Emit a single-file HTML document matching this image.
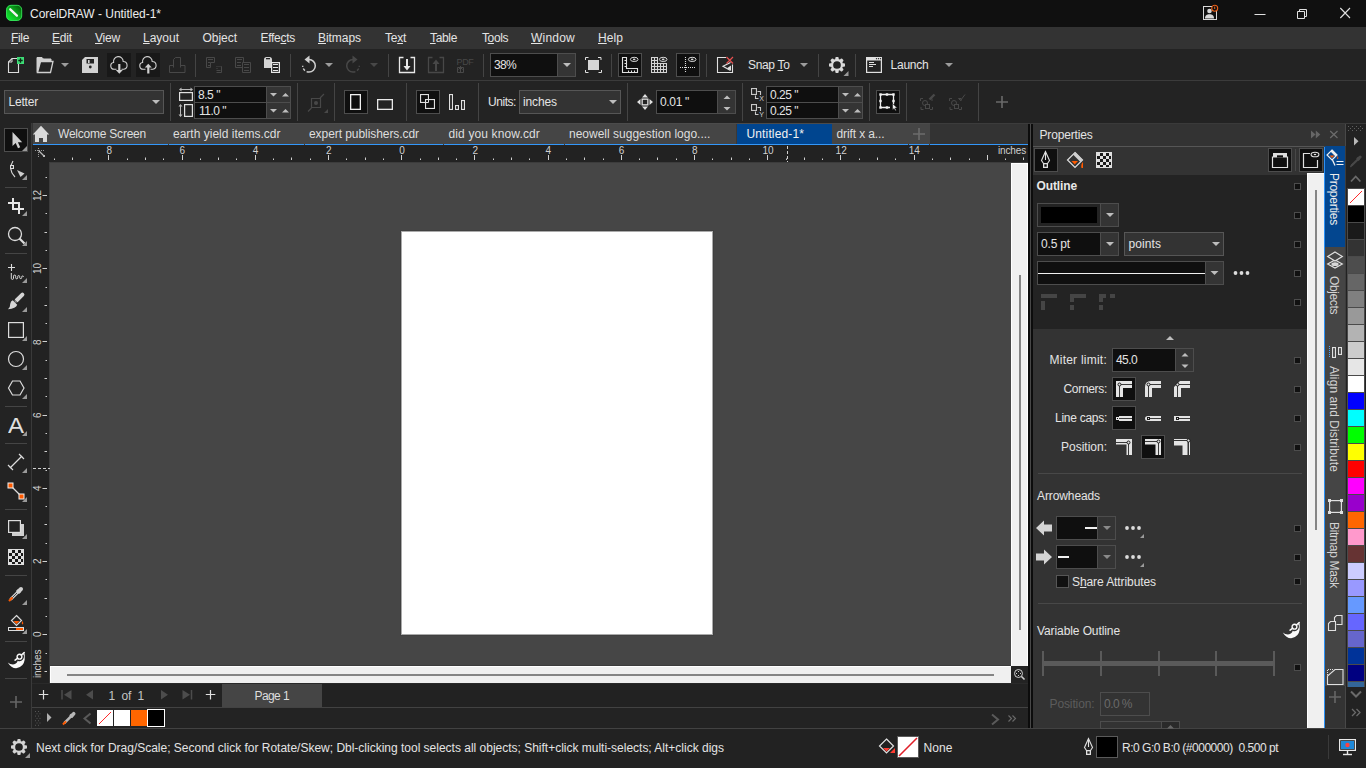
<!DOCTYPE html>
<html><head><meta charset="utf-8"><title>CorelDRAW - Untitled-1*</title>
<style>
*{box-sizing:border-box;margin:0;padding:0}
html,body{width:1366px;height:768px;overflow:hidden;background:#232323;font-family:"Liberation Sans",sans-serif;font-size:12px;color:#d8d8d8}
.a{position:absolute}
.t{position:absolute;white-space:pre}
u{text-decoration-thickness:1px;text-underline-offset:1px}
svg{position:absolute;left:0;top:0}
</style></head><body>
<div class="a" style="left:0px;top:0px;width:1366px;height:27px;background:#101010;"></div>
<div class="a" style="left:0px;top:27px;width:1366px;height:22px;background:#333;"></div>
<div class="a" style="left:0px;top:49px;width:1366px;height:31px;background:#232323;"></div>
<div class="a" style="left:0px;top:80px;width:1366px;height:1px;background:#3b3b3b;"></div>
<div class="a" style="left:107px;top:53px;width:24px;height:24px;background:#181818;"></div>
<div class="a" style="left:136px;top:53px;width:24px;height:24px;background:#181818;"></div>
<div class="a" style="left:195px;top:54px;width:1px;height:23px;background:#444;"></div>
<div class="a" style="left:290px;top:54px;width:1px;height:23px;background:#444;"></div>
<div class="a" style="left:388px;top:54px;width:1px;height:23px;background:#444;"></div>
<div class="a" style="left:483px;top:54px;width:1px;height:23px;background:#444;"></div>
<div class="a" style="left:490px;top:53px;width:86px;height:24px;background:#0f0f0f;border:1px solid #4d4d4d;"></div>
<div class="a" style="left:558px;top:54px;width:17px;height:22px;background:#343434;"></div>
<div class="a" style="left:557px;top:54px;width:1px;height:22px;background:#4d4d4d;"></div>
<div class="a" style="left:611px;top:54px;width:1px;height:23px;background:#444;"></div>
<div class="a" style="left:618px;top:53px;width:24px;height:24px;background:#0f0f0f;border:1px solid #4d4d4d;"></div>
<div class="a" style="left:676px;top:53px;width:24px;height:24px;background:#0f0f0f;border:1px solid #4d4d4d;"></div>
<div class="a" style="left:706px;top:54px;width:1px;height:23px;background:#444;"></div>
<div class="a" style="left:818px;top:54px;width:1px;height:23px;background:#444;"></div>
<div class="a" style="left:855px;top:54px;width:1px;height:23px;background:#444;"></div>
<div class="a" style="left:0px;top:81px;width:1366px;height:42px;background:#232323;"></div>
<div class="a" style="left:4px;top:90px;width:160px;height:24px;background:#333;border:1px solid #565656;"></div>
<div class="a" style="left:170px;top:83px;width:1px;height:38px;background:#444;"></div>
<div class="a" style="left:194px;top:86px;width:97px;height:33px;background:#0f0f0f;border:1px solid #4d4d4d;"></div>
<div class="a" style="left:267px;top:87px;width:23px;height:31px;background:#343434;"></div>
<div class="a" style="left:266px;top:87px;width:1px;height:31px;background:#4d4d4d;"></div>
<div class="a" style="left:195px;top:102px;width:95px;height:1px;background:#4d4d4d;"></div>
<div class="a" style="left:297px;top:83px;width:1px;height:38px;background:#444;"></div>
<div class="a" style="left:334px;top:83px;width:1px;height:38px;background:#444;"></div>
<div class="a" style="left:344px;top:90px;width:24px;height:24px;background:#0f0f0f;border:1px solid #4d4d4d;"></div>
<div class="a" style="left:406px;top:83px;width:1px;height:38px;background:#444;"></div>
<div class="a" style="left:416px;top:90px;width:24px;height:24px;background:#0f0f0f;border:1px solid #4d4d4d;"></div>
<div class="a" style="left:478px;top:83px;width:1px;height:38px;background:#444;"></div>
<div class="a" style="left:519px;top:90px;width:102px;height:24px;background:#333;border:1px solid #565656;"></div>
<div class="a" style="left:627px;top:83px;width:1px;height:38px;background:#444;"></div>
<div class="a" style="left:656px;top:90px;width:80px;height:24px;background:#0f0f0f;border:1px solid #4d4d4d;"></div>
<div class="a" style="left:718px;top:91px;width:17px;height:22px;background:#343434;"></div>
<div class="a" style="left:717px;top:91px;width:1px;height:22px;background:#4d4d4d;"></div>
<div class="a" style="left:742px;top:83px;width:1px;height:38px;background:#444;"></div>
<div class="a" style="left:766px;top:86px;width:97px;height:33px;background:#0f0f0f;border:1px solid #4d4d4d;"></div>
<div class="a" style="left:839px;top:87px;width:23px;height:31px;background:#343434;"></div>
<div class="a" style="left:838px;top:87px;width:1px;height:31px;background:#4d4d4d;"></div>
<div class="a" style="left:767px;top:102px;width:95px;height:1px;background:#4d4d4d;"></div>
<div class="a" style="left:869px;top:83px;width:1px;height:38px;background:#444;"></div>
<div class="a" style="left:876px;top:90px;width:24px;height:24px;background:#0f0f0f;border:1px solid #4d4d4d;"></div>
<div class="a" style="left:906px;top:83px;width:1px;height:38px;background:#444;"></div>
<div class="a" style="left:978px;top:83px;width:1px;height:38px;background:#444;"></div>
<div class="a" style="left:0px;top:123px;width:31px;height:606px;background:#232323;"></div>
<div class="a" style="left:31px;top:123px;width:1px;height:606px;background:#3a3a3a;"></div>
<div class="a" style="left:5px;top:187px;width:22px;height:1px;background:#454545;"></div>
<div class="a" style="left:5px;top:253px;width:22px;height:1px;background:#454545;"></div>
<div class="a" style="left:5px;top:406px;width:22px;height:1px;background:#454545;"></div>
<div class="a" style="left:5px;top:443px;width:22px;height:1px;background:#454545;"></div>
<div class="a" style="left:5px;top:509px;width:22px;height:1px;background:#454545;"></div>
<div class="a" style="left:5px;top:575px;width:22px;height:1px;background:#454545;"></div>
<div class="a" style="left:5px;top:641px;width:22px;height:1px;background:#454545;"></div>
<div class="a" style="left:5px;top:678px;width:22px;height:1px;background:#454545;"></div>
<div class="a" style="left:4px;top:128px;width:24px;height:24px;background:#0f0f0f;border:1px solid #4d4d4d;"></div>
<div class="a" style="left:32px;top:123px;width:996px;height:22px;background:#333;"></div>
<div class="a" style="left:930px;top:123px;width:98px;height:1px;background:#3c3c3c;"></div>
<div class="a" style="left:33px;top:123px;width:897px;height:21px;background:#454545;"></div>
<div class="a" style="left:33px;top:123px;width:897px;height:1px;background:#4b4b4b;"></div>
<div class="a" style="left:736px;top:124px;width:1px;height:20px;background:#3c3835;"></div>
<div class="a" style="left:737px;top:124px;width:95px;height:20px;background:#00458f;"></div>
<div class="a" style="left:33px;top:144px;width:995px;height:1px;background:#3397fa;"></div>
<div class="a" style="left:168px;top:144px;width:1px;height:1px;background:#3a3a3a;"></div>
<div class="a" style="left:304px;top:144px;width:1px;height:1px;background:#3a3a3a;"></div>
<div class="a" style="left:443px;top:144px;width:1px;height:1px;background:#3a3a3a;"></div>
<div class="a" style="left:564px;top:144px;width:1px;height:1px;background:#3a3a3a;"></div>
<div class="a" style="left:908px;top:144px;width:1px;height:1px;background:#3a3a3a;"></div>
<div class="a" style="left:929px;top:144px;width:1px;height:1px;background:#3a3a3a;"></div>
<div class="a" style="left:32px;top:145px;width:996px;height:17px;background:#222;"></div>
<div class="a" style="left:32px;top:162px;width:17px;height:521px;background:#222;"></div>
<div class="a" style="left:49px;top:162px;width:962px;height:504px;background:#464646;"></div>
<div class="a" style="left:49px;top:162px;width:1px;height:521px;background:#3c3c3c;"></div>
<div class="a" style="left:49px;top:665px;width:962px;height:1px;background:#3c3c3c;"></div>
<div class="a" style="left:400px;top:230px;width:314px;height:406px;background:#aaa;border:1px solid #404040;"></div>
<div class="a" style="left:402px;top:232px;width:310px;height:402px;background:#fff;"></div>
<div class="a" style="left:49px;top:162px;width:979px;height:1px;background:#3c3c3c;"></div>
<div class="a" style="left:1011px;top:163px;width:17px;height:503px;background:#f0f0f0;"></div>
<div class="a" style="left:1011px;top:163px;width:1px;height:503px;background:#fff;"></div>
<div class="a" style="left:1027px;top:163px;width:1px;height:503px;background:#fff;"></div>
<div class="a" style="left:1011px;top:163px;width:17px;height:1px;background:#fff;"></div>
<div class="a" style="left:1019px;top:275px;width:2px;height:355px;background:#858585;"></div>
<div class="a" style="left:50px;top:666px;width:961px;height:17px;background:#f0f0f0;"></div>
<div class="a" style="left:50px;top:666px;width:961px;height:1px;background:#fff;"></div>
<div class="a" style="left:50px;top:666px;width:1px;height:17px;background:#fff;"></div>
<div class="a" style="left:67px;top:674px;width:927px;height:2px;background:#858585;"></div>
<div class="a" style="left:1011px;top:666px;width:17px;height:17px;background:#232323;"></div>
<div class="a" style="left:32px;top:683px;width:996px;height:25px;background:#222;"></div>
<div class="a" style="left:32px;top:683px;width:996px;height:1px;background:#2a2a2a;"></div>
<div class="a" style="left:32px;top:707px;width:996px;height:1px;background:#424242;"></div>
<div class="a" style="left:222px;top:684px;width:100px;height:23px;background:#454545;"></div>
<div class="a" style="left:32px;top:708px;width:996px;height:20px;background:#232323;"></div>
<div class="a" style="left:0px;top:728px;width:1366px;height:1px;background:#424242;"></div>
<div class="a" style="left:97px;top:710px;width:16px;height:16px;background:#fff;"></div>
<div class="a" style="left:114px;top:710px;width:16px;height:16px;background:#fff;"></div>
<div class="a" style="left:131px;top:710px;width:16px;height:16px;background:#ff6600;"></div>
<div class="a" style="left:147px;top:709px;width:18px;height:18px;background:#000;border:1px solid #fff;"></div>
<div class="a" style="left:1028px;top:123px;width:5px;height:605px;background:#0c0c0c;"></div>
<div class="a" style="left:1030px;top:124px;width:1px;height:604px;background:#484848;"></div>
<div class="a" style="left:1028px;top:123px;width:5px;height:1px;background:#3a3a3a;"></div>
<div class="a" style="left:1033px;top:123px;width:313px;height:1px;background:#3a3a3a;"></div>
<div class="a" style="left:1033px;top:124px;width:313px;height:22px;background:#333;"></div>
<div class="a" style="left:1033px;top:146px;width:292px;height:1px;background:#565656;"></div>
<div class="a" style="left:1033px;top:147px;width:292px;height:28px;background:#333;"></div>
<div class="a" style="left:1033px;top:175px;width:274px;height:154px;background:#232323;"></div>
<div class="a" style="left:1033px;top:329px;width:274px;height:399px;background:#333;"></div>
<div class="a" style="left:1034px;top:148px;width:24px;height:24px;background:#0f0f0f;border:1px solid #4d4d4d;"></div>
<div class="a" style="left:1268px;top:148px;width:24px;height:24px;background:#0f0f0f;border:1px solid #4d4d4d;"></div>
<div class="a" style="left:1299px;top:148px;width:24px;height:24px;background:#0f0f0f;border:1px solid #4d4d4d;"></div>
<div class="a" style="left:1295px;top:149px;width:1px;height:22px;background:#484848;"></div>
<div class="a" style="left:1294px;top:183.0px;width:7px;height:7px;background:#111;border:1px solid #4c4c4c;"></div>
<div class="a" style="left:1294px;top:212.0px;width:7px;height:7px;background:#111;border:1px solid #4c4c4c;"></div>
<div class="a" style="left:1294px;top:241.0px;width:7px;height:7px;background:#111;border:1px solid #4c4c4c;"></div>
<div class="a" style="left:1294px;top:270.0px;width:7px;height:7px;background:#111;border:1px solid #4c4c4c;"></div>
<div class="a" style="left:1294px;top:299.0px;width:7px;height:7px;background:#111;border:1px solid #4c4c4c;"></div>
<div class="a" style="left:1294px;top:357.0px;width:7px;height:7px;background:#111;border:1px solid #4c4c4c;"></div>
<div class="a" style="left:1294px;top:386.0px;width:7px;height:7px;background:#111;border:1px solid #4c4c4c;"></div>
<div class="a" style="left:1294px;top:415.0px;width:7px;height:7px;background:#111;border:1px solid #4c4c4c;"></div>
<div class="a" style="left:1294px;top:444.0px;width:7px;height:7px;background:#111;border:1px solid #4c4c4c;"></div>
<div class="a" style="left:1294px;top:525.0px;width:7px;height:7px;background:#111;border:1px solid #4c4c4c;"></div>
<div class="a" style="left:1294px;top:554.0px;width:7px;height:7px;background:#111;border:1px solid #4c4c4c;"></div>
<div class="a" style="left:1294px;top:578.0px;width:7px;height:7px;background:#111;border:1px solid #4c4c4c;"></div>
<div class="a" style="left:1294px;top:664.0px;width:7px;height:7px;background:#111;border:1px solid #4c4c4c;"></div>
<div class="a" style="left:1037px;top:203px;width:82px;height:24px;background:#232323;border:1px solid #4d4d4d;"></div>
<div class="a" style="left:1041px;top:207px;width:56px;height:16px;background:#000;"></div>
<div class="a" style="left:1101px;top:204px;width:17px;height:22px;background:#343434;"></div>
<div class="a" style="left:1100px;top:204px;width:1px;height:22px;background:#4d4d4d;"></div>
<div class="a" style="left:1037px;top:232px;width:82px;height:24px;background:#0f0f0f;border:1px solid #4d4d4d;"></div>
<div class="a" style="left:1101px;top:233px;width:17px;height:22px;background:#343434;"></div>
<div class="a" style="left:1100px;top:233px;width:1px;height:22px;background:#4d4d4d;"></div>
<div class="a" style="left:1124px;top:232px;width:100px;height:24px;background:#333;border:1px solid #565656;"></div>
<div class="a" style="left:1037px;top:261px;width:187px;height:24px;background:#0f0f0f;border:1px solid #4d4d4d;"></div>
<div class="a" style="left:1038px;top:273px;width:167px;height:1px;background:#f0f0f0;"></div>
<div class="a" style="left:1206px;top:262px;width:17px;height:22px;background:#343434;"></div>
<div class="a" style="left:1205px;top:262px;width:1px;height:22px;background:#4d4d4d;"></div>
<div class="a" style="left:1112px;top:348px;width:82px;height:24px;background:#0f0f0f;border:1px solid #4d4d4d;"></div>
<div class="a" style="left:1176px;top:349px;width:17px;height:22px;background:#343434;"></div>
<div class="a" style="left:1175px;top:349px;width:1px;height:22px;background:#4d4d4d;"></div>
<div class="a" style="left:1112px;top:377px;width:24px;height:24px;background:#0f0f0f;border:1px solid #4d4d4d;"></div>
<div class="a" style="left:1112px;top:406px;width:24px;height:24px;background:#0f0f0f;border:1px solid #4d4d4d;"></div>
<div class="a" style="left:1141px;top:435px;width:24px;height:24px;background:#0f0f0f;border:1px solid #4d4d4d;"></div>
<div class="a" style="left:1038px;top:473px;width:264px;height:1px;background:#484848;"></div>
<div class="a" style="left:1056px;top:516px;width:60px;height:24px;background:#0f0f0f;border:1px solid #4d4d4d;"></div>
<div class="a" style="left:1098px;top:517px;width:17px;height:22px;background:#343434;"></div>
<div class="a" style="left:1097px;top:517px;width:1px;height:22px;background:#4d4d4d;"></div>
<div class="a" style="left:1056px;top:545px;width:60px;height:24px;background:#0f0f0f;border:1px solid #4d4d4d;"></div>
<div class="a" style="left:1098px;top:546px;width:17px;height:22px;background:#343434;"></div>
<div class="a" style="left:1097px;top:546px;width:1px;height:22px;background:#4d4d4d;"></div>
<div class="a" style="left:1085px;top:527px;width:12px;height:2px;background:#f0f0f0;"></div>
<div class="a" style="left:1058px;top:556px;width:11px;height:2px;background:#f0f0f0;"></div>
<div class="a" style="left:1056px;top:575px;width:13px;height:13px;background:#111;border:1px solid #565656;"></div>
<div class="a" style="left:1038px;top:603px;width:264px;height:1px;background:#484848;"></div>
<div class="a" style="left:1100px;top:692px;width:50px;height:24px;background:#333;border:1px solid #4d4d4d;"></div>
<div class="a" style="left:1100px;top:721px;width:80px;height:8px;background:#333;border:1px solid #4d4d4d;"></div>
<div class="a" style="left:1162px;top:722px;width:17px;height:6px;background:#2a2a2a;"></div>
<div class="a" style="left:1161px;top:722px;width:1px;height:6px;background:#4d4d4d;"></div>
<div class="a" style="left:1307px;top:173px;width:17px;height:555px;background:#f0f0f0;"></div>
<div class="a" style="left:1307px;top:173px;width:1px;height:555px;background:#fff;"></div>
<div class="a" style="left:1307px;top:173px;width:17px;height:1px;background:#fff;"></div>
<div class="a" style="left:1315px;top:190px;width:2px;height:340px;background:#858585;"></div>
<div class="a" style="left:1324px;top:146px;width:22px;height:540px;background:#454545;"></div>
<div class="a" style="left:1324px;top:686px;width:22px;height:42px;background:#333;"></div>
<div class="a" style="left:1345px;top:686px;width:1px;height:42px;background:#484848;"></div>
<div class="a" style="left:1324px;top:147px;width:1px;height:581px;background:#2b90f5;"></div>
<div class="a" style="left:1325px;top:146px;width:20px;height:101px;background:#03468f;"></div>
<div class="a" style="left:1345px;top:146px;width:1px;height:540px;background:#3c3c3c;"></div>
<div class="a" style="left:1346px;top:123px;width:20px;height:605px;background:#222;"></div>
<div class="a" style="left:1346px;top:123px;width:20px;height:1px;background:#3a3a3a;"></div>
<div class="a" style="left:1345px;top:124px;width:1px;height:22px;background:#484848;"></div>
<div class="a" style="left:1347px;top:188px;width:18px;height:499px;background:#4a4a4a;"></div>
<div class="a" style="left:1348px;top:189px;width:16px;height:16px;background:#fff;"></div>
<div class="a" style="left:1348px;top:206px;width:16px;height:16px;background:#000000;"></div>
<div class="a" style="left:1348px;top:223px;width:16px;height:16px;background:#1a1a1a;"></div>
<div class="a" style="left:1348px;top:240px;width:16px;height:16px;background:#333333;"></div>
<div class="a" style="left:1348px;top:257px;width:16px;height:16px;background:#4d4d4d;"></div>
<div class="a" style="left:1348px;top:274px;width:16px;height:16px;background:#666666;"></div>
<div class="a" style="left:1348px;top:291px;width:16px;height:16px;background:#808080;"></div>
<div class="a" style="left:1348px;top:308px;width:16px;height:16px;background:#999999;"></div>
<div class="a" style="left:1348px;top:325px;width:16px;height:16px;background:#b3b3b3;"></div>
<div class="a" style="left:1348px;top:342px;width:16px;height:16px;background:#cccccc;"></div>
<div class="a" style="left:1348px;top:359px;width:16px;height:16px;background:#e6e6e6;"></div>
<div class="a" style="left:1348px;top:376px;width:16px;height:16px;background:#ffffff;"></div>
<div class="a" style="left:1348px;top:393px;width:16px;height:16px;background:#0000ff;"></div>
<div class="a" style="left:1348px;top:410px;width:16px;height:16px;background:#00ffff;"></div>
<div class="a" style="left:1348px;top:427px;width:16px;height:16px;background:#00ff00;"></div>
<div class="a" style="left:1348px;top:444px;width:16px;height:16px;background:#ffff00;"></div>
<div class="a" style="left:1348px;top:461px;width:16px;height:16px;background:#ff0000;"></div>
<div class="a" style="left:1348px;top:478px;width:16px;height:16px;background:#ff00ff;"></div>
<div class="a" style="left:1348px;top:495px;width:16px;height:16px;background:#9900cc;"></div>
<div class="a" style="left:1348px;top:512px;width:16px;height:16px;background:#ff6600;"></div>
<div class="a" style="left:1348px;top:529px;width:16px;height:16px;background:#ff99cc;"></div>
<div class="a" style="left:1348px;top:546px;width:16px;height:16px;background:#663333;"></div>
<div class="a" style="left:1348px;top:563px;width:16px;height:16px;background:#ccccff;"></div>
<div class="a" style="left:1348px;top:580px;width:16px;height:16px;background:#9999ff;"></div>
<div class="a" style="left:1348px;top:597px;width:16px;height:16px;background:#6699ff;"></div>
<div class="a" style="left:1348px;top:614px;width:16px;height:16px;background:#6666ff;"></div>
<div class="a" style="left:1348px;top:631px;width:16px;height:16px;background:#6666cc;"></div>
<div class="a" style="left:1348px;top:648px;width:16px;height:16px;background:#003399;"></div>
<div class="a" style="left:1348px;top:665px;width:16px;height:16px;background:#000080;"></div>
<div class="a" style="left:1348px;top:682px;width:16px;height:5px;background:#336699;"></div>
<div class="a" style="left:0px;top:729px;width:1366px;height:39px;background:#222;"></div>
<div class="a" style="left:897px;top:736px;width:22px;height:22px;background:#fff;border:1px solid #5a5a5a;"></div>
<div class="a" style="left:1096px;top:736px;width:22px;height:22px;background:#000;border:1px solid #5a5a5a;"></div>
<div class="a" style="left:1328px;top:735px;width:1px;height:24px;background:#3a3a3a;"></div>
<svg width="1366" height="768" viewBox="0 0 1366 768">
<defs><linearGradient id="g1" x1="1" y1="0" x2="0" y2="1"><stop offset="0.080" stop-color="#04600a"/><stop offset="0.500" stop-color="#0cb020"/><stop offset="1" stop-color="#14f535"/></linearGradient></defs>
<rect x="6.500" y="5.300" width="15.200" height="15.200" rx="4.500" fill="url(#g1)" stroke="#36ea5a" stroke-width="0.900"/>
<path d="M10.300 9.300 L16.900 15.700" stroke="#f4f4f4" stroke-width="2.300" stroke-linecap="round"/>
<path d="M1254.5 14.5h11" stroke="#e0e0e0" stroke-width="1"/>
<path d="M1297.5 11.5h7v7h-7z M1299.5 11.5v-2h7v7h-2" stroke="#e0e0e0" fill="none" stroke-width="1"/>
<path d="M1340.300 8l9.700 10M1350 8l-9.700 10" stroke="#e0e0e0" stroke-width="1.100"/>
<rect x="1203.500" y="6.500" width="13" height="13" fill="none" stroke="#d8d8d8"/>
<circle cx="1209.500" cy="11" r="2.300" fill="#d8d8d8"/><path d="M1205 18.500c0-3.200 1.800-4.200 4.500-4.200s4.500 1 4.500 4.200z" fill="#d8d8d8"/>
<circle cx="1214.700" cy="8.300" r="3" fill="#101010" stroke="#e8601a" stroke-width="1.100"/><path d="M1214.700 6.600v2.400" stroke="#e8601a" stroke-width="1"/>
<path d="M8.500 62l3.500-3.500h6.500v14h-10z" fill="none" stroke="#dcdcdc" stroke-width="1.1" />
<path d="M12 58.500v3.500h-3.500" fill="none" stroke="#dcdcdc" stroke-width="1" />
<rect x="17" y="57" width="7" height="7" fill="#3ddc76" />
<path d="M20.500 58.300v4.400M18.300 60.500h4.400" fill="none" stroke="#0c2c14" stroke-width="1.3" />
<path d="M37 72.500v-15h5l1.500 1.500h7.500v3" fill="#cfcfcf" stroke="#cfcfcf" stroke-width="1" />
<path d="M40.500 61.500h12.500l-2.500 11h-13z" fill="#232323" stroke="#cfcfcf" stroke-width="1.3" />
<path d="M61 63h8l-4.0 4z" fill="#9c9c9c" />
<path d="M85 57h13v16h-16v-13z" fill="#d2d2d2" />
<rect x="86.5" y="59" width="7.5" height="4.5" fill="#232323" />
<rect x="88" y="60" width="1.6" height="3" fill="#d2d2d2" />
<circle cx="90.300" cy="67" r="1.400" fill="#232323"/>
<path d="M116.5 69.200h-2.300a3.400 3.400 0 0 1-0.600-6.750a4.850 4.850 0 1 1 9.600-1a3.900 3.900 0 0 1 0.600 7.750h-2.300" fill="none" stroke="#cfcfcf" stroke-width="1.1" />
<path d="M119.300 64v7" fill="none" stroke="#cfcfcf" stroke-width="2.2" />
<path d="M115.800 70h7l-3.500 3.700z" fill="#cfcfcf" />
<path d="M145.5 69.200h-2.300a3.400 3.400 0 0 1-0.600-6.750a4.850 4.850 0 1 1 9.600-1a3.900 3.900 0 0 1 0.600 7.750h-2.300" fill="none" stroke="#cfcfcf" stroke-width="1.1" />
<path d="M148.300 66.500v7" fill="none" stroke="#cfcfcf" stroke-width="2.2" />
<path d="M144.800 67.500h7l-3.500-3.700z" fill="#cfcfcf" />
<path d="M173.500 67.500v-8l2-2h5v10M169.500 65.500h4M180.500 65.500h4.500v7h-15.500v-7" fill="none" stroke="#484848" stroke-width="1" />
<path d="M206.500 57.500h8v5h-4v5h-4zM208 59.500h5M208 62.500h2M208 65.500h2" fill="none" stroke="#484848" stroke-width="1" />
<path d="M216.500 66.500h1M218.500 66.500h1M220.500 66.500h1v6h-5M216.500 68.500h1M216.500 70.500h4" fill="none" stroke="#484848" stroke-width="1" />
<path d="M235.500 57.500h8v10h-8z" fill="none" stroke="#484848" stroke-width="1" />
<path d="M242.500 62.500h8v10h-8z" fill="#232323" stroke="#484848" stroke-width="1" />
<path d="M237 59.500h5M237 62.500h4M237 65.500h4M244 64.500h5M244 67.500h5M244 70.500h5" fill="none" stroke="#484848" stroke-width="1" />
<path d="M264 59.500q0-2.500 2.500-2.500h3q2.500 0 2.500 2.500v8.500h-8z" fill="#d4d4d4" />
<rect x="266" y="58" width="4" height="1.3" fill="#232323" />
<rect x="271" y="62" width="9" height="11" fill="#232323" />
<rect x="271.6" y="62.6" width="7.8" height="9.8" fill="none" stroke="#e6e6e6" stroke-width="1.2" />
<path d="M273 64.500h5M273 67.500h5M273 70.500h5" fill="none" stroke="#e6e6e6" stroke-width="1.2" />
<path d="M309 59.500 a6.300 6.300 0 0 1 0 12.600" fill="none" stroke="#cfcfcf" stroke-width="1.5" />
<path d="M309 72.100 a6.300 6.300 0 0 1 -6.300 -6.300" fill="none" stroke="#cfcfcf" stroke-width="1.5" stroke-dasharray="2.500 1.800"/>
<path d="M309.500 55.500v8l-5-4z" fill="#cfcfcf" />
<path d="M325 63h8l-4.0 4z" fill="#9c9c9c" />
<path d="M353 59.500 a6.300 6.300 0 0 0 0 12.600" fill="none" stroke="#484848" stroke-width="1.5" />
<path d="M353 72.100 a6.300 6.300 0 0 0 6.300 -6.300" fill="none" stroke="#484848" stroke-width="1.5" stroke-dasharray="2.500 1.800"/>
<path d="M352.500 55.500v8l5-4z" fill="#484848" />
<path d="M370 63h8l-4.0 4z" fill="#484848" />
<path d="M403.500 57.500h-4v15h15v-15h-4" fill="none" stroke="#e8e8e8" stroke-width="1.3" />
<path d="M407 59v9" fill="none" stroke="#e8e8e8" stroke-width="2" />
<path d="M403.500 66h7l-3.500 4.500z" fill="#e8e8e8" />
<path d="M432.500 57.500h-4v15h15v-15h-4" fill="none" stroke="#484848" stroke-width="1.3" />
<path d="M436 62v9" fill="none" stroke="#484848" stroke-width="2" />
<path d="M432.500 64h7l-3.500-4.500z" fill="#484848" />
<path d="M457.500 67.500h6v5h-6zM460.500 66v6M458.500 69.500l2-2 2 2" fill="none" stroke="#484848" stroke-width="1" />
<path d="M563 63h8l-4.0 4z" fill="#bdbdbd" />
<rect x="588" y="60" width="11" height="10" fill="#d6d6d6" />
<path d="M585.500 60v-2.500h3M598 57.500h3v2.500M601.500 70v2.500h-3M588.500 72.500h-3v-2.500" fill="none" stroke="#e0e0e0" stroke-width="1" />
<path d="M622.500 57.500h4v11h11v4h-15z" fill="none" stroke="#e0e0e0" stroke-width="1.1" />
<path d="M624.500 60.500h2M624.500 63.500h2M624.500 66.500h2M628.500 70.500v2M631.500 70.500v2M634.500 70.500v2" fill="none" stroke="#e0e0e0" stroke-width="1" />
<ellipse cx="634.2" cy="59.4" rx="3.800" ry="2.100" fill="none" stroke="#d8d8d8" stroke-width="1"/><ellipse cx="634.2" cy="59.4" rx="1.300" ry="0.800" fill="#d8d8d8"/>
<rect x="651" y="57" width="4" height="4" fill="#d4d4d4" />
<rect x="651" y="60" width="4" height="4" fill="#d4d4d4" />
<rect x="651" y="63" width="4" height="4" fill="#d4d4d4" />
<rect x="651" y="66" width="4" height="4" fill="#d4d4d4" />
<rect x="651" y="69" width="4" height="4" fill="#d4d4d4" />
<rect x="654" y="57" width="4" height="4" fill="#d4d4d4" />
<rect x="654" y="60" width="4" height="4" fill="#d4d4d4" />
<rect x="654" y="63" width="4" height="4" fill="#d4d4d4" />
<rect x="654" y="66" width="4" height="4" fill="#d4d4d4" />
<rect x="654" y="69" width="4" height="4" fill="#d4d4d4" />
<rect x="657" y="63" width="4" height="4" fill="#d4d4d4" />
<rect x="657" y="66" width="4" height="4" fill="#d4d4d4" />
<rect x="657" y="69" width="4" height="4" fill="#d4d4d4" />
<rect x="660" y="63" width="4" height="4" fill="#d4d4d4" />
<rect x="660" y="66" width="4" height="4" fill="#d4d4d4" />
<rect x="660" y="69" width="4" height="4" fill="#d4d4d4" />
<rect x="663" y="63" width="4" height="4" fill="#d4d4d4" />
<rect x="663" y="66" width="4" height="4" fill="#d4d4d4" />
<rect x="663" y="69" width="4" height="4" fill="#d4d4d4" />
<rect x="652" y="58" width="2" height="2" fill="#2c2c2c" />
<rect x="652" y="61" width="2" height="2" fill="#2c2c2c" />
<rect x="652" y="64" width="2" height="2" fill="#2c2c2c" />
<rect x="652" y="67" width="2" height="2" fill="#2c2c2c" />
<rect x="652" y="70" width="2" height="2" fill="#2c2c2c" />
<rect x="655" y="58" width="2" height="2" fill="#2c2c2c" />
<rect x="655" y="61" width="2" height="2" fill="#2c2c2c" />
<rect x="655" y="64" width="2" height="2" fill="#2c2c2c" />
<rect x="655" y="67" width="2" height="2" fill="#2c2c2c" />
<rect x="655" y="70" width="2" height="2" fill="#2c2c2c" />
<rect x="658" y="64" width="2" height="2" fill="#2c2c2c" />
<rect x="658" y="67" width="2" height="2" fill="#2c2c2c" />
<rect x="658" y="70" width="2" height="2" fill="#2c2c2c" />
<rect x="661" y="64" width="2" height="2" fill="#2c2c2c" />
<rect x="661" y="67" width="2" height="2" fill="#2c2c2c" />
<rect x="661" y="70" width="2" height="2" fill="#2c2c2c" />
<rect x="664" y="64" width="2" height="2" fill="#2c2c2c" />
<rect x="664" y="67" width="2" height="2" fill="#2c2c2c" />
<rect x="664" y="70" width="2" height="2" fill="#2c2c2c" />
<ellipse cx="663.2" cy="59.4" rx="3.800" ry="2.100" fill="none" stroke="#d8d8d8" stroke-width="1"/><ellipse cx="663.2" cy="59.4" rx="1.300" ry="0.800" fill="#d8d8d8"/>
<path d="M685.500 57v16M680 67.500h16" fill="none" stroke="#e0e0e0" stroke-width="1.1" stroke-dasharray="1 1"/>
<ellipse cx="692.2" cy="59.4" rx="3.800" ry="2.100" fill="none" stroke="#d8d8d8" stroke-width="1"/><ellipse cx="692.2" cy="59.4" rx="1.300" ry="0.800" fill="#d8d8d8"/>
<path d="M726 57.500h-8.500v15h15v-8" fill="none" stroke="#e0e0e0" stroke-width="1.1" />
<path d="M730.500 62.500l-7.500 3.800l7.500 4.200" fill="none" stroke="#e0e0e0" stroke-width="1.2" />
<path d="M731 65.500v5l-4-2.200z" fill="#e0e0e0" />
<path d="M726.500 57l6.500 6.500M733 57l-6.500 6.500" fill="none" stroke="#e85050" stroke-width="1.2" />
<path d="M800 63h8l-4.0 4z" fill="#9c9c9c" />
<g transform="translate(837 65)"><circle r="5" fill="none" stroke="#dadada" stroke-width="2.300"/><rect x="-1.700" y="-8" width="3.400" height="3" rx="1" fill="#dadada" transform="rotate(0)"/><rect x="-1.700" y="-8" width="3.400" height="3" rx="1" fill="#dadada" transform="rotate(45)"/><rect x="-1.700" y="-8" width="3.400" height="3" rx="1" fill="#dadada" transform="rotate(90)"/><rect x="-1.700" y="-8" width="3.400" height="3" rx="1" fill="#dadada" transform="rotate(135)"/><rect x="-1.700" y="-8" width="3.400" height="3" rx="1" fill="#dadada" transform="rotate(180)"/><rect x="-1.700" y="-8" width="3.400" height="3" rx="1" fill="#dadada" transform="rotate(225)"/><rect x="-1.700" y="-8" width="3.400" height="3" rx="1" fill="#dadada" transform="rotate(270)"/><rect x="-1.700" y="-8" width="3.400" height="3" rx="1" fill="#dadada" transform="rotate(315)"/></g>
<path d="M848.5 76h-5l5 -5z" fill="#9a9a9a" />
<rect x="866.6" y="57.6" width="14.8" height="14.8" fill="none" stroke="#e0e0e0" stroke-width="1.2" />
<rect x="866" y="57" width="16" height="3.5" fill="#e0e0e0" />
<path d="M869 62.500h5M869 64.500h7M869 66.500h4" fill="none" stroke="#e0e0e0" stroke-width="1" />
<circle cx="876.5" cy="58.700" r="0.650" fill="#232323"/>
<circle cx="878.5" cy="58.700" r="0.650" fill="#232323"/>
<circle cx="880.5" cy="58.700" r="0.650" fill="#232323"/>
<path d="M945 63h8l-4.0 4z" fill="#9c9c9c" />
<path d="M152 100h8l-4.0 4z" fill="#bdbdbd" />
<path d="M180 89.500h12" fill="none" stroke="#bbb" stroke-width="1" />
<path d="M179 89.500l2.500-2v4zM193 89.500l-2.500-2v4z" fill="#bbb" />
<rect x="179.6" y="92.6" width="12.8" height="7.8" fill="none" stroke="#e0e0e0" stroke-width="1.2" />
<path d="M180.500 105v11" fill="none" stroke="#bbb" stroke-width="1" />
<path d="M180.500 104l-2 2.500h4zM180.500 117l-2-2.500h4z" fill="#bbb" />
<rect x="184.6" y="104.6" width="7.8" height="11.8" fill="none" stroke="#e0e0e0" stroke-width="1.2" />
<path d="M270 93h7l-3.5 3.5z" fill="#bdbdbd" />
<path d="M282 96.5h7l-3.5 -3.5z" fill="#bdbdbd" />
<path d="M270 109h7l-3.5 3.5z" fill="#bdbdbd" />
<path d="M282 112.5h7l-3.5 -3.5z" fill="#bdbdbd" />
<path d="M311.500 98.500h9v9h-9zM320 98l4-4M311.500 108l-3.500 3.500" fill="none" stroke="#484848" stroke-width="1.2" />
<circle cx="316" cy="103" r="2" fill="#484848"/>
<path d="M328 113h-4l4 -4z" fill="#484848" />
<rect x="350.65" y="94.65" width="9.7" height="14.7" fill="none" stroke="#f0f0f0" stroke-width="1.3" />
<rect x="377.65" y="99.65" width="14.7" height="9.7" fill="none" stroke="#e8e8e8" stroke-width="1.3" />
<rect x="420.55" y="94.55" width="7.9" height="7.9" fill="none" stroke="#e0e0e0" stroke-width="1.1" />
<rect x="425" y="99" width="10" height="10" fill="#0f0f0f" />
<rect x="425.55" y="99.55" width="8.9" height="8.9" fill="none" stroke="#e0e0e0" stroke-width="1.1" />
<path d="M425.500 102.500h3v-3" fill="none" stroke="#e0e0e0" stroke-width="1" />
<rect x="449.55" y="94.55" width="2.9" height="14.9" fill="none" stroke="#e0e0e0" stroke-width="1.1" />
<rect x="455.55" y="105.55" width="2.9" height="3.9" fill="none" stroke="#e0e0e0" stroke-width="1.1" />
<rect x="461.55" y="100.55" width="2.9" height="8.9" fill="none" stroke="#e0e0e0" stroke-width="1.1" />
<path d="M609 100h8l-4.0 4z" fill="#bdbdbd" />
<rect x="642.15" y="99.15" width="5.7" height="5.7" fill="none" stroke="#e0e0e0" stroke-width="1.3" />
<path d="M645 94l3 3.500h-6zM645 110l3-3.500h-6zM637 102l3.500-3v6zM653 102l-3.500-3v6z" fill="#e0e0e0" />
<path d="M723.5 99.0h7l-3.5 -3.5z" fill="#bdbdbd" />
<path d="M723.5 107h7l-3.5 3.5z" fill="#bdbdbd" />
<rect x="751.55" y="88.55" width="4.9" height="5.9" fill="none" stroke="#c8c8c8" stroke-width="1.1" />
<path d="M757.500 91.5h3v3.500M755.500 95.5v3h3" fill="none" stroke="#c8c8c8" stroke-width="1.1" />
<rect x="751.55" y="104.55" width="4.9" height="5.9" fill="none" stroke="#c8c8c8" stroke-width="1.1" />
<path d="M757.500 107.5h3v3.500M755.500 111.5v3h3" fill="none" stroke="#c8c8c8" stroke-width="1.1" />
<path d="M842 93h7l-3.5 3.5z" fill="#bdbdbd" />
<path d="M854 96.5h7l-3.5 -3.5z" fill="#bdbdbd" />
<path d="M842 109h7l-3.5 3.5z" fill="#bdbdbd" />
<path d="M854 112.5h7l-3.5 -3.5z" fill="#bdbdbd" />
<path d="M880.500 94.500h13v10M890 107.500h-9.500v-13" fill="none" stroke="#f0f0f0" stroke-width="1.3" />
<rect x="879.3" y="93.3" width="2.4" height="2.4" fill="#f0f0f0" />
<rect x="885.8" y="93.3" width="2.4" height="2.4" fill="#f0f0f0" />
<rect x="892.3" y="93.3" width="2.4" height="2.4" fill="#f0f0f0" />
<rect x="879.3" y="99.8" width="2.4" height="2.4" fill="#f0f0f0" />
<rect x="892.3" y="99.8" width="2.4" height="2.4" fill="#f0f0f0" />
<rect x="879.3" y="106.3" width="2.4" height="2.4" fill="#f0f0f0" />
<rect x="885.8" y="106.3" width="2.4" height="2.4" fill="#f0f0f0" />
<path d="M892.500 103.500v6.500l1.600-1.500l1.200 2.300l1-0.500l-1.200-2.300h2.200z" fill="#f0f0f0" stroke="#0f0f0f" stroke-width="0.5" />
<path d="M920.5 101v-2.500h2.500M929.5 98.500h2.500v2.500M932.5 107v2.500h-2.500M923.5 109.500h-2.500v-2.500" fill="none" stroke="#484848" stroke-width="1" />
<circle cx="925" cy="103" r="2.500" fill="none" stroke="#484848"/>
<rect x="925.5" y="104.5" width="4" height="4" fill="#232323" stroke="#484848" stroke-width="1" />
<path d="M929.500 99.500l5-5" fill="none" stroke="#484848" stroke-width="2.4" />
<path d="M949.5 101v-2.500h2.500M958.5 98.500h2.500v2.500M961.5 107v2.500h-2.500M952.5 109.500h-2.500v-2.500" fill="none" stroke="#484848" stroke-width="1" />
<circle cx="954" cy="103" r="2.500" fill="none" stroke="#484848"/>
<rect x="954.5" y="104.5" width="4" height="4" fill="#232323" stroke="#484848" stroke-width="1" />
<path d="M958.500 98.500l2 2l4.500-6" fill="none" stroke="#484848" stroke-width="1" />
<path d="M1002 96v12M996 102h12" fill="none" stroke="#6a6a6a" stroke-width="1.6" />
<path d="M12.500 132v14l3.200-3l2.300 5.200l2.200-1l-2.300-5h4.300z" fill="#d0d0d0" />
<path d="M27 151h-5l5 -5z" fill="#9a9a9a" />
<path d="M13 161q-5.500 8.500 2 16" fill="none" stroke="#dcdcdc" stroke-width="1.1" />
<rect x="10.55" y="165.55" width="2.9" height="2.9" fill="#181818" stroke="#dcdcdc" stroke-width="1.1" />
<path d="M17 170l7.500 3.500l-4 3.500z" fill="#cfcfcf" />
<path d="M27 180h-5l5 -5z" fill="#9a9a9a" />
<path d="M13 198v11h11M8 203h11v11" fill="none" stroke="#e6e6e6" stroke-width="2" />
<path d="M27 216h-5l5 -5z" fill="#9a9a9a" />
<circle cx="15" cy="234" r="6.500" fill="none" stroke="#dcdcdc" stroke-width="1.300"/>
<path d="M19.500 238.500l5 5" fill="none" stroke="#dcdcdc" stroke-width="2.2" />
<path d="M27 246h-5l5 -5z" fill="#9a9a9a" />
<path d="M11.500 264v7M8 267.500h7" fill="none" stroke="#dcdcdc" stroke-width="1.1" />
<path d="M11.300 273v5.300a1.100 1.100 0 0 0 2.200 0v-2.100a1.100 1.100 0 0 1 2.200 0v1.600a1 1 0 0 0 2 0v-1.200a1 1 0 0 1 2 0v1a1 1 0 0 0 2 0v-0.700a0.900 0.900 0 0 1 1.800 0" fill="none" stroke="#dcdcdc" stroke-width="1" />
<path d="M27 283h-5l5 -5z" fill="#9a9a9a" />
<path d="M16.500 300.500L22.400 294.600" fill="none" stroke="#d6d6d6" stroke-width="4" stroke-linecap="round"/>
<path d="M12.800 300.300L17.200 304.700Q16 308.600 8 309.300Q10.500 306.500 10.200 304Q10.600 301 12.800 300.300z" fill="#d6d6d6" />
<path d="M13.800 299.300l4.400 4.400" fill="none" stroke="#232323" stroke-width="0.9" />
<path d="M27 312h-5l5 -5z" fill="#9a9a9a" />
<rect x="8.6" y="322.6" width="14.8" height="14.8" fill="none" stroke="#dcdcdc" stroke-width="1.2" />
<path d="M27 341h-5l5 -5z" fill="#9a9a9a" />
<circle cx="16" cy="359" r="7.500" fill="none" stroke="#dcdcdc" stroke-width="1.200"/>
<path d="M27 370h-5l5 -5z" fill="#9a9a9a" />
<path d="M8.500 388l4-7h7.500l4 7l-4 7h-7.500z" fill="none" stroke="#dcdcdc" stroke-width="1.2" />
<path d="M27 399h-5l5 -5z" fill="#9a9a9a" />
<path d="M27 436h-5l5 -5z" fill="#9a9a9a" />
<path d="M10 468l12-12" fill="none" stroke="#dcdcdc" stroke-width="1.2" />
<path d="M8 465l5 5M19 454l5 5" fill="none" stroke="#dcdcdc" stroke-width="1.2" />
<path d="M27 473h-5l5 -5z" fill="#9a9a9a" />
<path d="M10.500 485.500l11 11" fill="none" stroke="#dcdcdc" stroke-width="1.3" />
<rect x="8" y="483" width="5" height="5" fill="#ff5a00" stroke="#f0f0f0" stroke-width="1" />
<rect x="19" y="494" width="5" height="5" fill="#ff5a00" stroke="#f0f0f0" stroke-width="1" />
<path d="M27 502h-5l5 -5z" fill="#9a9a9a" />
<rect x="12" y="524" width="12" height="12" fill="#cfcfcf" />
<rect x="8" y="520" width="12" height="12" fill="#232323" />
<rect x="8.6" y="520.6" width="11.8" height="11.8" fill="none" stroke="#dcdcdc" stroke-width="1.2" />
<path d="M27 539h-5l5 -5z" fill="#9a9a9a" />
<rect x="8" y="549" width="16" height="16" fill="#e0e0e0" />
<rect x="9" y="553" width="3" height="3" fill="#1a1a1a" />
<rect x="9" y="559" width="3" height="3" fill="#1a1a1a" />
<rect x="12" y="550" width="3" height="3" fill="#1a1a1a" />
<rect x="12" y="556" width="3" height="3" fill="#1a1a1a" />
<rect x="12" y="562" width="3" height="2" fill="#1a1a1a" />
<rect x="15" y="553" width="3" height="3" fill="#1a1a1a" />
<rect x="15" y="559" width="3" height="3" fill="#1a1a1a" />
<rect x="18" y="550" width="3" height="3" fill="#1a1a1a" />
<rect x="18" y="556" width="3" height="3" fill="#1a1a1a" />
<rect x="18" y="562" width="3" height="2" fill="#1a1a1a" />
<rect x="21" y="553" width="2" height="3" fill="#1a1a1a" />
<rect x="21" y="559" width="2" height="3" fill="#1a1a1a" />
<g transform="translate(8 586)"><path d="M2.500 13.500l7.500-7.500" stroke="#d0d0d0" stroke-width="3"/><path d="M2.500 13.500l7.500-7.500" stroke="#232323" stroke-width="0.800"/><path d="M1 15l3.500-3.500" stroke="#ff5a00" stroke-width="2.200"/><path d="M9 4l3 3" stroke="#d0d0d0" stroke-width="2.400"/><path d="M10.500 5.500l2.500-2.500" stroke="#d0d0d0" stroke-width="4" stroke-linecap="round"/></g>
<path d="M27 605h-5l5 -5z" fill="#9a9a9a" />
<path d="M16.500 615.500l5 5l-5 5l-5-5z" fill="none" stroke="#dcdcdc" stroke-width="1.2" />
<path d="M13.500 621h6l-3 3z" fill="#ff5a00" />
<path d="M22.500 621q1.500 2.500 0 3.500q-1.500-1 0-3.500z" fill="#ff5a00" />
<rect x="8.5" y="627.5" width="15" height="3" fill="none" stroke="#dcdcdc" stroke-width="1" />
<rect x="16" y="628" width="7" height="2" fill="#ff5a00" />
<path d="M27 634h-5l5 -5z" fill="#9a9a9a" />
<g transform="translate(8 651.5)"><path d="M-0.200 10.900Q3.500 17.200 9 16.600Q15.500 15.500 16.700 8.300Q17.200 3.500 16.200 0.500L15 2.600A4.400 4.400 0 0 1 9.600 9.200Q9.500 12 5 13Q2 13 -0.200 10.900Z" fill="#fafafa"/><circle cx="11.500" cy="5.200" r="2.400" fill="#232323" stroke="#fafafa" stroke-width="1.400"/><path d="M7.100 8.700l2.600-2.100M13.400 3.500l2.800-2.500" stroke="#fafafa" stroke-width="1.500" stroke-linecap="round"/></g>
<path d="M16 696v12M10 702h12" fill="none" stroke="#666" stroke-width="1.6" />
<path d="M919 128v12M913 134h12" fill="none" stroke="#6c6c6c" stroke-width="1.6" />
<path d="M32.800 134.500l8.200-8.700l8.200 8.700h-2.200v7.500h-4v-4h-4v4h-4v-7.500z" fill="#dadada" />
<rect x="54" y="158.5" width="1" height="1.5" fill="#d0d0d0" />
<rect x="72" y="157.5" width="1" height="2.5" fill="#d0d0d0" />
<rect x="90" y="158.5" width="1" height="1.5" fill="#d0d0d0" />
<rect x="108" y="155" width="1" height="5" fill="#d0d0d0" />
<rect x="127" y="158.5" width="1" height="1.5" fill="#d0d0d0" />
<rect x="145" y="157.5" width="1" height="2.5" fill="#d0d0d0" />
<rect x="163" y="158.5" width="1" height="1.5" fill="#d0d0d0" />
<rect x="182" y="155" width="1" height="5" fill="#d0d0d0" />
<rect x="200" y="158.5" width="1" height="1.5" fill="#d0d0d0" />
<rect x="218" y="157.5" width="1" height="2.5" fill="#d0d0d0" />
<rect x="236" y="158.5" width="1" height="1.5" fill="#d0d0d0" />
<rect x="255" y="155" width="1" height="5" fill="#d0d0d0" />
<rect x="273" y="158.5" width="1" height="1.5" fill="#d0d0d0" />
<rect x="291" y="157.5" width="1" height="2.5" fill="#d0d0d0" />
<rect x="310" y="158.5" width="1" height="1.5" fill="#d0d0d0" />
<rect x="328" y="155" width="1" height="5" fill="#d0d0d0" />
<rect x="346" y="158.5" width="1" height="1.5" fill="#d0d0d0" />
<rect x="365" y="157.5" width="1" height="2.5" fill="#d0d0d0" />
<rect x="383" y="158.5" width="1" height="1.5" fill="#d0d0d0" />
<rect x="401" y="155" width="1" height="5" fill="#d0d0d0" />
<rect x="420" y="158.5" width="1" height="1.5" fill="#d0d0d0" />
<rect x="438" y="157.5" width="1" height="2.5" fill="#d0d0d0" />
<rect x="456" y="158.5" width="1" height="1.5" fill="#d0d0d0" />
<rect x="474" y="155" width="1" height="5" fill="#d0d0d0" />
<rect x="493" y="158.5" width="1" height="1.5" fill="#d0d0d0" />
<rect x="511" y="157.5" width="1" height="2.5" fill="#d0d0d0" />
<rect x="529" y="158.5" width="1" height="1.5" fill="#d0d0d0" />
<rect x="548" y="155" width="1" height="5" fill="#d0d0d0" />
<rect x="566" y="158.5" width="1" height="1.5" fill="#d0d0d0" />
<rect x="584" y="157.5" width="1" height="2.5" fill="#d0d0d0" />
<rect x="603" y="158.5" width="1" height="1.5" fill="#d0d0d0" />
<rect x="621" y="155" width="1" height="5" fill="#d0d0d0" />
<rect x="639" y="158.5" width="1" height="1.5" fill="#d0d0d0" />
<rect x="657" y="157.5" width="1" height="2.5" fill="#d0d0d0" />
<rect x="676" y="158.5" width="1" height="1.5" fill="#d0d0d0" />
<rect x="694" y="155" width="1" height="5" fill="#d0d0d0" />
<rect x="712" y="158.5" width="1" height="1.5" fill="#d0d0d0" />
<rect x="731" y="157.5" width="1" height="2.5" fill="#d0d0d0" />
<rect x="749" y="158.5" width="1" height="1.5" fill="#d0d0d0" />
<rect x="767" y="155" width="1" height="5" fill="#d0d0d0" />
<rect x="786" y="158.5" width="1" height="1.5" fill="#d0d0d0" />
<rect x="804" y="157.5" width="1" height="2.5" fill="#d0d0d0" />
<rect x="822" y="158.5" width="1" height="1.5" fill="#d0d0d0" />
<rect x="840" y="155" width="1" height="5" fill="#d0d0d0" />
<rect x="859" y="158.5" width="1" height="1.5" fill="#d0d0d0" />
<rect x="877" y="157.5" width="1" height="2.5" fill="#d0d0d0" />
<rect x="895" y="158.5" width="1" height="1.5" fill="#d0d0d0" />
<rect x="914" y="155" width="1" height="5" fill="#d0d0d0" />
<rect x="932" y="158.5" width="1" height="1.5" fill="#d0d0d0" />
<rect x="950" y="157.5" width="1" height="2.5" fill="#d0d0d0" />
<rect x="969" y="158.5" width="1" height="1.5" fill="#d0d0d0" />
<rect x="987" y="155" width="1" height="5" fill="#d0d0d0" />
<rect x="1005" y="158.5" width="1" height="1.5" fill="#d0d0d0" />
<rect x="1023" y="157.5" width="1" height="2.5" fill="#d0d0d0" />
<path d="M38.500 148v9M35 150.500h9" fill="none" stroke="#9a9a9a" stroke-width="1" stroke-dasharray="1 1"/>
<path d="M39 151l5 5" fill="none" stroke="#bbb" stroke-width="1.2" />
<rect x="43" y="155" width="2" height="2" fill="#bbb" />
<path d="M787.500 146v16" fill="none" stroke="#d0d0d0" stroke-width="1" stroke-dasharray="3 2"/>
<path d="M33 468.500h17" fill="none" stroke="#d0d0d0" stroke-width="1" stroke-dasharray="3 2"/>
<rect x="44.5" y="671" width="2.5" height="1" fill="#d0d0d0" />
<rect x="45.5" y="653" width="1.5" height="1" fill="#d0d0d0" />
<rect x="42.5" y="634" width="4.5" height="1" fill="#d0d0d0" />
<rect x="45.5" y="616" width="1.5" height="1" fill="#d0d0d0" />
<rect x="44.5" y="598" width="2.5" height="1" fill="#d0d0d0" />
<rect x="45.5" y="579" width="1.5" height="1" fill="#d0d0d0" />
<rect x="42.5" y="561" width="4.5" height="1" fill="#d0d0d0" />
<rect x="45.5" y="543" width="1.5" height="1" fill="#d0d0d0" />
<rect x="44.5" y="524" width="2.5" height="1" fill="#d0d0d0" />
<rect x="45.5" y="506" width="1.5" height="1" fill="#d0d0d0" />
<rect x="42.5" y="488" width="4.5" height="1" fill="#d0d0d0" />
<rect x="45.5" y="470" width="1.5" height="1" fill="#d0d0d0" />
<rect x="44.5" y="451" width="2.5" height="1" fill="#d0d0d0" />
<rect x="45.5" y="433" width="1.5" height="1" fill="#d0d0d0" />
<rect x="42.5" y="415" width="4.5" height="1" fill="#d0d0d0" />
<rect x="45.5" y="396" width="1.5" height="1" fill="#d0d0d0" />
<rect x="44.5" y="378" width="2.5" height="1" fill="#d0d0d0" />
<rect x="45.5" y="360" width="1.5" height="1" fill="#d0d0d0" />
<rect x="42.5" y="341" width="4.5" height="1" fill="#d0d0d0" />
<rect x="45.5" y="323" width="1.5" height="1" fill="#d0d0d0" />
<rect x="44.5" y="305" width="2.5" height="1" fill="#d0d0d0" />
<rect x="45.5" y="287" width="1.5" height="1" fill="#d0d0d0" />
<rect x="42.5" y="268" width="4.5" height="1" fill="#d0d0d0" />
<rect x="45.5" y="250" width="1.5" height="1" fill="#d0d0d0" />
<rect x="44.5" y="232" width="2.5" height="1" fill="#d0d0d0" />
<rect x="45.5" y="213" width="1.5" height="1" fill="#d0d0d0" />
<rect x="42.5" y="195" width="4.5" height="1" fill="#d0d0d0" />
<rect x="45.5" y="177" width="1.5" height="1" fill="#d0d0d0" />
<circle cx="1018.500" cy="673.500" r="4" fill="none" stroke="#d0d0d0" stroke-width="1"/>
<path d="M1021.500 676.500l3 3" fill="none" stroke="#d0d0d0" stroke-width="1.6" />
<rect x="1018" y="671" width="1" height="1" fill="#d0d0d0" />
<rect x="1018" y="675" width="1" height="1" fill="#d0d0d0" />
<rect x="1016" y="673" width="1" height="1" fill="#d0d0d0" />
<rect x="1020" y="673" width="1" height="1" fill="#d0d0d0" />
<path d="M43.500 690v9.500M38.800 694.500h9.500" fill="none" stroke="#e0e0e0" stroke-width="1.2" />
<path d="M62 690v9.500" fill="none" stroke="#4c4c4c" stroke-width="1.5" />
<path d="M71.500 690v9.500l-7.500-4.750z" fill="#4c4c4c" />
<path d="M93 690v9.500l-7-4.750z" fill="#4c4c4c" />
<path d="M161 690v9.500l7-4.750z" fill="#4c4c4c" />
<path d="M191.500 690v9.500" fill="none" stroke="#4c4c4c" stroke-width="1.5" />
<path d="M182.500 690v9.500l7.500-4.750z" fill="#4c4c4c" />
<path d="M210.500 690v9.500M205.800 694.500h9.500" fill="none" stroke="#e0e0e0" stroke-width="1.2" />
<rect x="35" y="711.0" width="1" height="1" fill="#555" />
<rect x="38" y="711.0" width="1" height="1" fill="#555" />
<rect x="36.5" y="713.3" width="1" height="1" fill="#555" />
<rect x="39.5" y="713.3" width="1" height="1" fill="#555" />
<rect x="35" y="715.6" width="1" height="1" fill="#555" />
<rect x="38" y="715.6" width="1" height="1" fill="#555" />
<rect x="36.5" y="717.9" width="1" height="1" fill="#555" />
<rect x="39.5" y="717.9" width="1" height="1" fill="#555" />
<rect x="35" y="720.2" width="1" height="1" fill="#555" />
<rect x="38" y="720.2" width="1" height="1" fill="#555" />
<rect x="36.5" y="722.5" width="1" height="1" fill="#555" />
<rect x="39.5" y="722.5" width="1" height="1" fill="#555" />
<rect x="35" y="724.8" width="1" height="1" fill="#555" />
<rect x="38" y="724.8" width="1" height="1" fill="#555" />
<path d="M47 713v9l4.500-4.500z" fill="#b0b0b0" />
<g transform="translate(62 711) scale(0.9)"><path d="M2.500 13.500l7.500-7.500" stroke="#b8b8b8" stroke-width="3"/><path d="M1 15l3.500-3.500" stroke="#ff5a00" stroke-width="2.200"/><path d="M9 4l3 3" stroke="#b8b8b8" stroke-width="2.400"/><path d="M10.500 5.500l2.500-2.500" stroke="#b8b8b8" stroke-width="4" stroke-linecap="round"/></g>
<path d="M90.500 713.500l-6 5l6 5" fill="none" stroke="#5a5a5a" stroke-width="2" />
<path d="M99 724l12-12" fill="none" stroke="#ff2a2a" stroke-width="1" />
<path d="M992 714.500l6 5l-6 5" fill="none" stroke="#5a5a5a" stroke-width="2" />
<path d="M1008.500 715.500l3 3l-3 3M1012.500 715.500l3 3l-3 3" fill="none" stroke="#6a6a6a" stroke-width="1.1" />
<path d="M1311 130.500l4.500 4l-4.500 4zM1315.800 130.500l4.500 4l-4.500 4z" fill="#666" />
<path d="M1330.200 131l7.300 7M1337.500 131l-7.300 7" fill="none" stroke="#6c6c6c" stroke-width="1.2" />
<path d="M1045.500 151.500L1041.500 160.500L1043.500 163.500h4L1049.500 160.500z" fill="none" stroke="#e0e0e0" stroke-width="1.1" />
<path d="M1045.500 153v7" fill="none" stroke="#e0e0e0" stroke-width="1.1" />
<rect x="1043.65" y="163.65" width="3.7" height="3.7" fill="none" stroke="#e0e0e0" stroke-width="1.3" />
<path d="M1075 152.500l7.500 7.500l-7.500 7.500l-7.500-7.500z" fill="none" stroke="#e0e0e0" stroke-width="1.2" />
<path d="M1075 152.500l7.500 7.500l-2 2l-7.500-7.500z" fill="#d0d0d0" />
<path d="M1071.500 161h6.500l-3.250 3.500z" fill="#ff5a00" />
<path d="M1083 162q-2.500 2.500-1.500 6h1.500z" fill="#ff5a00" />
<rect x="1096" y="152" width="16" height="16" fill="#e0e0e0" />
<rect x="1097" y="156" width="3" height="3" fill="#1a1a1a" />
<rect x="1097" y="162" width="3" height="3" fill="#1a1a1a" />
<rect x="1100" y="153" width="3" height="3" fill="#1a1a1a" />
<rect x="1100" y="159" width="3" height="3" fill="#1a1a1a" />
<rect x="1100" y="165" width="3" height="2" fill="#1a1a1a" />
<rect x="1103" y="156" width="3" height="3" fill="#1a1a1a" />
<rect x="1103" y="162" width="3" height="3" fill="#1a1a1a" />
<rect x="1106" y="153" width="3" height="3" fill="#1a1a1a" />
<rect x="1106" y="159" width="3" height="3" fill="#1a1a1a" />
<rect x="1106" y="165" width="3" height="2" fill="#1a1a1a" />
<rect x="1109" y="156" width="2" height="3" fill="#1a1a1a" />
<rect x="1109" y="162" width="2" height="3" fill="#1a1a1a" />
<path d="M1272.500 167.500v-10.500h15v10.500z" fill="none" stroke="#e0e0e0" stroke-width="1.2" />
<rect x="1273" y="153" width="14" height="4" fill="#dcdcdc" />
<rect x="1277" y="155.3" width="6" height="2.2" fill="#0f0f0f" />
<path d="M1310 153.500h-6.500v14h14v-7.500" fill="none" stroke="#e0e0e0" stroke-width="1.2" />
<ellipse cx="1315" cy="154.500" rx="3.900" ry="2.300" fill="none" stroke="#e0e0e0" stroke-width="1.100"/><ellipse cx="1315" cy="154.500" rx="1.300" ry="0.800" fill="#e0e0e0"/>
<path d="M1106 213h8l-4.0 4z" fill="#bdbdbd" />
<path d="M1106 242h8l-4.0 4z" fill="#bdbdbd" />
<path d="M1212 242h8l-4.0 4z" fill="#bdbdbd" />
<path d="M1210.5 271h8l-4.0 4z" fill="#bdbdbd" />
<circle cx="1235.5" cy="273" r="1.900" fill="#dcdcdc"/>
<circle cx="1241.5" cy="273" r="1.900" fill="#dcdcdc"/>
<circle cx="1247.5" cy="273" r="1.900" fill="#dcdcdc"/>
<rect x="1041" y="294" width="16" height="4" fill="#454545" />
<rect x="1041" y="301" width="4" height="9" fill="#454545" />
<rect x="1070" y="294" width="16" height="4" fill="#454545" />
<rect x="1070" y="298" width="4" height="4" fill="#454545" />
<rect x="1070" y="305" width="4" height="5" fill="#454545" />
<rect x="1099" y="294" width="7" height="4" fill="#454545" />
<rect x="1099" y="298" width="4" height="4" fill="#454545" />
<rect x="1099" y="305" width="4" height="5" fill="#454545" />
<rect x="1110" y="294" width="5" height="4" fill="#454545" />
<path d="M1166 340h8l-4.0 -4z" fill="#bdbdbd" />
<path d="M1181.5 356.5h7l-3.5 -3.5z" fill="#bdbdbd" />
<path d="M1181.5 364.5h7l-3.5 3.5z" fill="#bdbdbd" />
<path d="M1116 381h16v7h-9v9h-7z" fill="#e4e4e4" />
<rect x="1119" y="384" width="1" height="13" fill="#3a3a3a" />
<rect x="1119" y="384" width="13" height="1" fill="#3a3a3a" />
<circle cx="1119.5" cy="384.5" r="1.500" fill="#e4e4e4" stroke="#1c1c1c" stroke-width="1"/>
<path d="M1145 387q0-6 6-6h10v7h-9v9h-7z" fill="#e4e4e4" />
<rect x="1148" y="384" width="1" height="13" fill="#3a3a3a" />
<rect x="1148" y="384" width="13" height="1" fill="#3a3a3a" />
<circle cx="1148.5" cy="384.5" r="1.500" fill="#e4e4e4" stroke="#1c1c1c" stroke-width="1"/>
<path d="M1174 387l6-6h10v7h-9v9h-7z" fill="#e4e4e4" />
<rect x="1177" y="384" width="1" height="13" fill="#3a3a3a" />
<rect x="1177" y="384" width="13" height="1" fill="#3a3a3a" />
<circle cx="1177.5" cy="384.5" r="1.500" fill="#e4e4e4" stroke="#1c1c1c" stroke-width="1"/>
<rect x="1119" y="416" width="13" height="5" fill="#e4e4e4" />
<rect x="1119" y="418" width="13" height="1" fill="#3a3a3a" />
<rect x="1116.5" y="417.5" width="2" height="2" fill="#1c1c1c" stroke="#e4e4e4" stroke-width="1" />
<path d="M1148 416h13v5h-13q-3 0-3-2.500t3-2.500z" fill="#e4e4e4" />
<rect x="1149" y="418" width="12" height="1" fill="#3a3a3a" />
<rect x="1147.5" y="417.5" width="2" height="2" fill="#e4e4e4" stroke="#1c1c1c" stroke-width="1" />
<rect x="1174" y="416" width="16" height="5" fill="#e4e4e4" />
<rect x="1178" y="418" width="12" height="1" fill="#3a3a3a" />
<rect x="1176.5" y="417.5" width="2" height="2" fill="#e4e4e4" stroke="#1c1c1c" stroke-width="1" />
<path d="M1116 439h16v16h-5.500v-10.500h-10.500z" fill="#e4e4e4" />
<rect x="1116" y="442" width="12" height="1" fill="#3a3a3a" />
<rect x="1128" y="442" width="1" height="13" fill="#3a3a3a" />
<circle cx="1128.5" cy="442.5" r="1.500" fill="#e4e4e4" stroke="#1c1c1c" stroke-width="1"/>
<path d="M1145 439h16v16h-5.500v-10.500h-10.500z" fill="#e4e4e4" />
<rect x="1145" y="441" width="13" height="1" fill="#3a3a3a" />
<rect x="1158" y="441" width="1" height="14" fill="#3a3a3a" />
<circle cx="1158.5" cy="441.5" r="1.500" fill="#e4e4e4" stroke="#1c1c1c" stroke-width="1"/>
<path d="M1174 441h13.500v14h-5v-9.500h-8.500z" fill="#e4e4e4" />
<rect x="1174" y="439" width="15" height="1" fill="#e4e4e4" />
<rect x="1189" y="440" width="1" height="15" fill="#e4e4e4" />
<circle cx="1188.5" cy="440.5" r="1.500" fill="#e4e4e4" stroke="#1c1c1c" stroke-width="1"/>
<path d="M1036 528l8-7.500v4h8v7h-8v4z" fill="#d4d4d4" />
<path d="M1052 557l-8-7.500v4h-8v7h8v4z" fill="#d4d4d4" />
<path d="M1103 526h8l-4.0 4z" fill="#8a8a8a" />
<circle cx="1127" cy="528" r="1.900" fill="#dcdcdc"/>
<circle cx="1133" cy="528" r="1.900" fill="#dcdcdc"/>
<circle cx="1139" cy="528" r="1.900" fill="#dcdcdc"/>
<path d="M1144 538h-4l4 -4z" fill="#9a9a9a" />
<path d="M1103 555h8l-4.0 4z" fill="#8a8a8a" />
<circle cx="1127" cy="557" r="1.900" fill="#dcdcdc"/>
<circle cx="1133" cy="557" r="1.900" fill="#dcdcdc"/>
<circle cx="1139" cy="557" r="1.900" fill="#dcdcdc"/>
<path d="M1144 567h-4l4 -4z" fill="#9a9a9a" />
<g transform="translate(1283 621.5)"><path d="M-0.200 10.900Q3.500 17.200 9 16.600Q15.500 15.500 16.700 8.300Q17.200 3.500 16.200 0.500L15 2.600A4.400 4.400 0 0 1 9.600 9.200Q9.500 12 5 13Q2 13 -0.200 10.900Z" fill="#fafafa"/><circle cx="11.500" cy="5.200" r="2.400" fill="#333" stroke="#fafafa" stroke-width="1.400"/><path d="M7.100 8.700l2.600-2.100M13.400 3.500l2.800-2.500" stroke="#fafafa" stroke-width="1.500" stroke-linecap="round"/></g>
<rect x="1042" y="661" width="233" height="5" fill="#5a5a5a" />
<rect x="1042" y="651" width="2" height="25" fill="#5a5a5a" />
<rect x="1100" y="651" width="2" height="25" fill="#5a5a5a" />
<rect x="1158" y="651" width="2" height="25" fill="#5a5a5a" />
<rect x="1215" y="651" width="2" height="25" fill="#5a5a5a" />
<rect x="1273" y="651" width="2" height="25" fill="#5a5a5a" />
<path d="M1167 728.5h7l-3.5 -3.5z" fill="#666" />
<path d="M1332 150l5 5l-5 5l-5-5z" fill="none" stroke="#f0f0f0" stroke-width="1.2" />
<path d="M1332 150l5 5l-1.500 1.500l-5-5z" fill="#f0f0f0" />
<path d="M1329.500 155.500h5l-2.500 2.500z" fill="#ff5a00" />
<path d="M1337.500 156.500q0.800 1.500 0 2.500" fill="none" stroke="#ff5a00" stroke-width="1" />
<path d="M1336.500 161.500h7M1336.500 164.500h7" fill="none" stroke="#f0f0f0" stroke-width="1.2" />
<path d="M1332.500 160l2.500 5.500" fill="none" stroke="#f0f0f0" stroke-width="1.3" />
<path d="M1335 260l7.300 4l-7.300 4l-7.300-4z" fill="#454545" stroke="#e0e0e0" stroke-width="1.2" />
<ellipse cx="1335" cy="264.200" rx="3.600" ry="1.900" fill="#d8d8d8"/>
<path d="M1335 252l7.300 4.500l-7.300 4.500l-7.300-4.500z" fill="#454545" stroke="#e0e0e0" stroke-width="1.2" />
<path d="M1329.500 346v12" fill="none" stroke="#4aa3ff" stroke-width="1" stroke-dasharray="1 1"/>
<rect x="1332.55" y="347.55" width="2.9" height="9.9" fill="none" stroke="#e0e0e0" stroke-width="1.1" />
<rect x="1338.55" y="347.55" width="2.9" height="6.9" fill="none" stroke="#e0e0e0" stroke-width="1.1" />
<rect x="1329.6" y="500.6" width="11.8" height="11.8" fill="none" stroke="#e0e0e0" stroke-width="1.2" />
<rect x="1328.0" y="499.0" width="3" height="3" fill="#e0e0e0" />
<rect x="1340.0" y="499.0" width="3" height="3" fill="#e0e0e0" />
<rect x="1328.0" y="511.0" width="3" height="3" fill="#e0e0e0" />
<rect x="1340.0" y="511.0" width="3" height="3" fill="#e0e0e0" />
<path d="M1334.500 621.500v-4l2-2h5.500v9h-5.500" fill="none" stroke="#e0e0e0" stroke-width="1.1" />
<path d="M1328.500 630.500v-7l2-2h5v9z" fill="none" stroke="#e0e0e0" stroke-width="1.1" />
<path d="M1327.500 684.500v-8.500l7.500-6.500h8v15z" fill="none" stroke="#e0e0e0" stroke-width="1.1" />
<path d="M1328 669.500h6" fill="none" stroke="#e0e0e0" stroke-width="1" stroke-dasharray="1 1"/>
<path d="M1327.500 670v5" fill="none" stroke="#e0e0e0" stroke-width="1" stroke-dasharray="1 1"/>
<path d="M1335 691v12M1329 697h12" fill="none" stroke="#666" stroke-width="1.6" />
<rect x="1348" y="126" width="1" height="1" fill="#606060" />
<rect x="1352" y="126" width="1" height="1" fill="#606060" />
<rect x="1356" y="126" width="1" height="1" fill="#606060" />
<rect x="1360" y="126" width="1" height="1" fill="#606060" />
<rect x="1350" y="128" width="1" height="1" fill="#606060" />
<rect x="1354" y="128" width="1" height="1" fill="#606060" />
<rect x="1358" y="128" width="1" height="1" fill="#606060" />
<rect x="1362" y="128" width="1" height="1" fill="#606060" />
<rect x="1348" y="130" width="1" height="1" fill="#606060" />
<rect x="1352" y="130" width="1" height="1" fill="#606060" />
<rect x="1356" y="130" width="1" height="1" fill="#606060" />
<rect x="1360" y="130" width="1" height="1" fill="#606060" />
<path d="M1354 137v8.500l4.500-4.250z" fill="#b8b8b8" />
<g transform="translate(1349.500 154.500) scale(0.82)"><path d="M2.500 13.500l7.500-7.500" stroke="#484848" stroke-width="2.600"/><path d="M1 15l3.500-3.500" stroke="#484848" stroke-width="2"/><path d="M9 4l3 3" stroke="#484848" stroke-width="2.400"/><path d="M10.500 5.500l2.500-2.500" stroke="#484848" stroke-width="3.600" stroke-linecap="round"/></g>
<path d="M1351 181.500l4.700-5l4.700 5" fill="none" stroke="#6a6a6a" stroke-width="1.8" />
<path d="M1350 203l12-12" fill="none" stroke="#ff2a2a" stroke-width="1" />
<path d="M1351 691.500l5 5l5-5" fill="none" stroke="#6a6a6a" stroke-width="2" />
<path d="M1352 709l3.500 3.500l-3.500 3.500M1356.500 709l3.500 3.500l-3.500 3.500" fill="none" stroke="#6a6a6a" stroke-width="1.3" />
<g transform="translate(19 747)"><circle r="5" fill="none" stroke="#d4d4d4" stroke-width="2.300"/><rect x="-1.700" y="-8" width="3.400" height="3" rx="1" fill="#d4d4d4" transform="rotate(0)"/><rect x="-1.700" y="-8" width="3.400" height="3" rx="1" fill="#d4d4d4" transform="rotate(45)"/><rect x="-1.700" y="-8" width="3.400" height="3" rx="1" fill="#d4d4d4" transform="rotate(90)"/><rect x="-1.700" y="-8" width="3.400" height="3" rx="1" fill="#d4d4d4" transform="rotate(135)"/><rect x="-1.700" y="-8" width="3.400" height="3" rx="1" fill="#d4d4d4" transform="rotate(180)"/><rect x="-1.700" y="-8" width="3.400" height="3" rx="1" fill="#d4d4d4" transform="rotate(225)"/><rect x="-1.700" y="-8" width="3.400" height="3" rx="1" fill="#d4d4d4" transform="rotate(270)"/><rect x="-1.700" y="-8" width="3.400" height="3" rx="1" fill="#d4d4d4" transform="rotate(315)"/></g>
<path d="M30 758h-5l5 -5z" fill="#9a9a9a" />
<path d="M886.500 739l7 7l-7 7l-7-7z" fill="none" stroke="#e0e0e0" stroke-width="1.2" />
<path d="M883 748h7l-3.500 3.500z" fill="#ff3b30" />
<path d="M890 753h5v-5z" fill="#ff3b30" />
<path d="M899 756l18-18" fill="none" stroke="#e0202a" stroke-width="1.6" />
<path d="M1088.500 738.500L1084.500 747.500L1086.500 750.500h4L1092.500 747.500z" fill="none" stroke="#e0e0e0" stroke-width="1.1" />
<path d="M1088.500 740v7" fill="none" stroke="#e0e0e0" stroke-width="1.1" />
<rect x="1086.65" y="750.65" width="3.7" height="3.7" fill="none" stroke="#e0e0e0" stroke-width="1.3" />
<rect x="1339.6" y="739.6" width="15.8" height="10.8" fill="none" stroke="#e8e8e8" stroke-width="1.2" />
<rect x="1341" y="741" width="13" height="8" fill="#1e88d8" />
<circle cx="1347.500" cy="745" r="2.200" fill="#ff4040"/>
<path d="M1343 754.500h9" fill="none" stroke="#e8e8e8" stroke-width="1.4" />
<path d="M1347.500 751v3" fill="none" stroke="#e8e8e8" stroke-width="1.4" />
</svg>
<div class="t" style="left:30px;top:7px;font-size:12px;line-height:14px;color:#ececec;letter-spacing:-0.025px;">CorelDRAW - Untitled-1*</div>
<div class="t" style="left:11px;top:31px;font-size:12px;line-height:14px;color:#e4e4e4;letter-spacing:-0.334px;"><u>F</u>ile</div>
<div class="t" style="left:52px;top:31px;font-size:12px;line-height:14px;color:#e4e4e4;letter-spacing:-0.169px;"><u>E</u>dit</div>
<div class="t" style="left:95px;top:31px;font-size:12px;line-height:14px;color:#e4e4e4;letter-spacing:-0.198px;"><u>V</u>iew</div>
<div class="t" style="left:143px;top:31px;font-size:12px;line-height:14px;color:#e4e4e4;"><u>L</u>ayout</div>
<div class="t" style="left:202.5px;top:31px;font-size:12px;line-height:14px;color:#e4e4e4;letter-spacing:-0.030px;">Ob<u>j</u>ect</div>
<div class="t" style="left:260.5px;top:31px;font-size:12px;line-height:14px;color:#e4e4e4;letter-spacing:-0.280px;">Effe<u>c</u>ts</div>
<div class="t" style="left:318px;top:31px;font-size:12px;line-height:14px;color:#e4e4e4;letter-spacing:-0.050px;"><u>B</u>itmaps</div>
<div class="t" style="left:385px;top:31px;font-size:12px;line-height:14px;color:#e4e4e4;letter-spacing:-0.252px;">Te<u>x</u>t</div>
<div class="t" style="left:430px;top:31px;font-size:12px;line-height:14px;color:#e4e4e4;letter-spacing:-0.338px;"><u>T</u>able</div>
<div class="t" style="left:482px;top:31px;font-size:12px;line-height:14px;color:#e4e4e4;letter-spacing:-0.403px;">T<u>o</u>ols</div>
<div class="t" style="left:531px;top:31px;font-size:12px;line-height:14px;color:#e4e4e4;letter-spacing:0.220px;"><u>W</u>indow</div>
<div class="t" style="left:598px;top:31px;font-size:12px;line-height:14px;color:#e4e4e4;letter-spacing:0.080px;"><u>H</u>elp</div>
<div class="t" style="left:456.5px;top:56.5px;font-size:9px;line-height:10px;color:#484848;letter-spacing:-0.334px;">PDF</div>
<div class="t" style="left:494px;top:58px;font-size:12px;line-height:14px;color:#e4e4e4;letter-spacing:-0.673px;">38%</div>
<div class="t" style="left:748px;top:58px;font-size:12px;line-height:14px;color:#e4e4e4;letter-spacing:-0.331px;">Snap <u>T</u>o</div>
<div class="t" style="left:890.5px;top:58px;font-size:12px;line-height:14px;color:#e4e4e4;letter-spacing:-0.228px;">Launch</div>
<div class="t" style="left:8.5px;top:95px;font-size:12px;line-height:14px;color:#e4e4e4;letter-spacing:-0.198px;">Letter</div>
<div class="t" style="left:198px;top:88px;font-size:12px;line-height:14px;color:#e4e4e4;letter-spacing:-0.455px;">8.5 &quot;</div>
<div class="t" style="left:199px;top:104px;font-size:12px;line-height:14px;color:#e4e4e4;letter-spacing:-0.510px;">11.0 &quot;</div>
<div class="t" style="left:488px;top:95px;font-size:12px;line-height:14px;color:#e4e4e4;letter-spacing:-0.446px;">Units:</div>
<div class="t" style="left:523px;top:95px;font-size:12px;line-height:14px;color:#e4e4e4;letter-spacing:-0.115px;">inches</div>
<div class="t" style="left:660px;top:95px;font-size:12px;line-height:14px;color:#e4e4e4;letter-spacing:-0.325px;">0.01 &quot;</div>
<div class="t" style="left:759.2px;top:95px;font-size:7px;line-height:7px;color:#d0d0d0;">X</div>
<div class="t" style="left:759.2px;top:111px;font-size:7px;line-height:7px;color:#d0d0d0;">Y</div>
<div class="t" style="left:770px;top:88px;font-size:12px;line-height:14px;color:#e4e4e4;letter-spacing:-0.492px;">0.25 &quot;</div>
<div class="t" style="left:770px;top:104px;font-size:12px;line-height:14px;color:#e4e4e4;letter-spacing:-0.492px;">0.25 &quot;</div>
<div class="t" style="left:8px;top:413px;font-size:22px;line-height:25px;color:#e0e0e0;transform:scaleX(1.09);transform-origin:0 0;">A</div>
<div class="t" style="left:58px;top:127px;font-size:12px;line-height:14px;color:#dedede;letter-spacing:-0.225px;">Welcome Screen</div>
<div class="t" style="left:173px;top:127px;font-size:12px;line-height:14px;color:#dedede;letter-spacing:0.006px;">earth yield items.cdr</div>
<div class="t" style="left:309px;top:127px;font-size:12px;line-height:14px;color:#dedede;letter-spacing:-0.066px;">expert publishers.cdr</div>
<div class="t" style="left:448.5px;top:127px;font-size:12px;line-height:14px;color:#dedede;letter-spacing:0.132px;">did you know.cdr</div>
<div class="t" style="left:569px;top:127px;font-size:12px;line-height:14px;color:#dedede;">neowell suggestion logo....</div>
<div class="t" style="left:836.5px;top:127px;font-size:12px;line-height:14px;color:#dedede;letter-spacing:-0.112px;">drift x a...</div>
<div class="t" style="left:746.5px;top:127px;font-size:12px;line-height:14px;color:#f2f2f2;letter-spacing:0.134px;">Untitled-1*</div>
<div class="t" style="left:106.4px;top:145px;font-size:10px;line-height:11px;color:#d0d0d0;">8</div>
<div class="t" style="left:179.6px;top:145px;font-size:10px;line-height:11px;color:#d0d0d0;">6</div>
<div class="t" style="left:252.8px;top:145px;font-size:10px;line-height:11px;color:#d0d0d0;">4</div>
<div class="t" style="left:326.0px;top:145px;font-size:10px;line-height:11px;color:#d0d0d0;">2</div>
<div class="t" style="left:399.2px;top:145px;font-size:10px;line-height:11px;color:#d0d0d0;">0</div>
<div class="t" style="left:472.4px;top:145px;font-size:10px;line-height:11px;color:#d0d0d0;">2</div>
<div class="t" style="left:545.6px;top:145px;font-size:10px;line-height:11px;color:#d0d0d0;">4</div>
<div class="t" style="left:618.8px;top:145px;font-size:10px;line-height:11px;color:#d0d0d0;">6</div>
<div class="t" style="left:692.0px;top:145px;font-size:10px;line-height:11px;color:#d0d0d0;">8</div>
<div class="t" style="left:762.4px;top:145px;font-size:10px;line-height:11px;color:#d0d0d0;">10</div>
<div class="t" style="left:835.6px;top:145px;font-size:10px;line-height:11px;color:#d0d0d0;">12</div>
<div class="t" style="left:908.8px;top:145px;font-size:10px;line-height:11px;color:#d0d0d0;">14</div>
<div class="t" style="left:998px;top:145px;font-size:10px;line-height:11px;color:#d0d0d0;letter-spacing:-0.151px;">inches</div>
<div class="t" style="left:32px;top:637.3px;font-size:10px;line-height:11px;color:#d0d0d0;transform-origin:0 0;transform:rotate(-90deg)">0</div>
<div class="t" style="left:32px;top:564.1px;font-size:10px;line-height:11px;color:#d0d0d0;transform-origin:0 0;transform:rotate(-90deg)">2</div>
<div class="t" style="left:32px;top:490.9px;font-size:10px;line-height:11px;color:#d0d0d0;transform-origin:0 0;transform:rotate(-90deg)">4</div>
<div class="t" style="left:32px;top:417.7px;font-size:10px;line-height:11px;color:#d0d0d0;transform-origin:0 0;transform:rotate(-90deg)">6</div>
<div class="t" style="left:32px;top:344.5px;font-size:10px;line-height:11px;color:#d0d0d0;transform-origin:0 0;transform:rotate(-90deg)">8</div>
<div class="t" style="left:32px;top:274.1px;font-size:10px;line-height:11px;color:#d0d0d0;transform-origin:0 0;transform:rotate(-90deg)">10</div>
<div class="t" style="left:32px;top:200.9px;font-size:10px;line-height:11px;color:#d0d0d0;transform-origin:0 0;transform:rotate(-90deg)">12</div>
<div class="t" style="left:31.5px;top:678px;font-size:10px;line-height:11px;color:#d0d0d0;transform-origin:0 0;transform:rotate(-90deg);letter-spacing:-0.1px">inches</div>
<div class="t" style="left:108.5px;top:689px;font-size:12px;line-height:14px;color:#c4c4c4;letter-spacing:-0.149px;">1  of  1</div>
<div class="t" style="left:254.5px;top:689px;font-size:12px;line-height:14px;color:#dedede;letter-spacing:-0.589px;">Page 1</div>
<div class="t" style="left:1039.5px;top:128px;font-size:12px;line-height:14px;color:#e4e4e4;letter-spacing:-0.169px;">Properties</div>
<div class="t" style="left:1036.5px;top:179px;font-size:12px;line-height:14px;color:#e8e8e8;letter-spacing:-0.119px;font-weight:bold;">Outline</div>
<div class="t" style="left:1041px;top:237px;font-size:12px;line-height:14px;color:#e4e4e4;letter-spacing:-0.171px;">0.5 pt</div>
<div class="t" style="left:1128.5px;top:237px;font-size:12px;line-height:14px;color:#e4e4e4;letter-spacing:0.080px;">points</div>
<div class="t" style="left:1049.5px;top:353px;font-size:12px;line-height:14px;color:#e4e4e4;letter-spacing:0.236px;">Miter limit:</div>
<div class="t" style="left:1116px;top:353px;font-size:12px;line-height:14px;color:#e4e4e4;letter-spacing:-0.589px;">45.0</div>
<div class="t" style="left:1063.5px;top:382px;font-size:12px;line-height:14px;color:#e4e4e4;letter-spacing:-0.314px;">Corners:</div>
<div class="t" style="left:1055px;top:411px;font-size:12px;line-height:14px;color:#e4e4e4;letter-spacing:-0.270px;">Line caps:</div>
<div class="t" style="left:1061px;top:440px;font-size:12px;line-height:14px;color:#e4e4e4;">Position:</div>
<div class="t" style="left:1037px;top:489px;font-size:12px;line-height:14px;color:#e4e4e4;letter-spacing:-0.103px;">Arrowheads</div>
<div class="t" style="left:1072px;top:575px;font-size:12px;line-height:14px;color:#e4e4e4;letter-spacing:-0.086px;">S<u>h</u>are Attributes</div>
<div class="t" style="left:1037px;top:624px;font-size:12px;line-height:14px;color:#e4e4e4;letter-spacing:-0.093px;">Variable Outline</div>
<div class="t" style="left:1049.5px;top:697px;font-size:12px;line-height:14px;color:#5c5c5c;letter-spacing:-0.114px;">Position:</div>
<div class="t" style="left:1104px;top:697px;font-size:12px;line-height:14px;color:#6a6a6a;letter-spacing:-0.537px;">0.0 %</div>
<div class="t" style="left:1327px;top:172.5px;writing-mode:vertical-rl;font-size:12px;line-height:14px;color:#ececec;letter-spacing:-0.269px">Properties</div>
<div class="t" style="left:1327px;top:275.5px;writing-mode:vertical-rl;font-size:12px;line-height:14px;color:#d4d4d4;letter-spacing:-0.383px">Objects</div>
<div class="t" style="left:1327px;top:366px;writing-mode:vertical-rl;font-size:12px;line-height:14px;color:#d4d4d4;letter-spacing:0.097px">Align and Distribute</div>
<div class="t" style="left:1327px;top:521.5px;writing-mode:vertical-rl;font-size:12px;line-height:14px;color:#d4d4d4;letter-spacing:-0.305px">Bitmap Mask</div>
<div class="t" style="left:36px;top:741px;font-size:12px;line-height:14px;color:#e4e4e4;letter-spacing:-0.007px;">Next click for Drag/Scale; Second click for Rotate/Skew; Dbl-clicking tool selects all objects; Shift+click multi-selects; Alt+click digs</div>
<div class="t" style="left:923.5px;top:741px;font-size:12px;line-height:14px;color:#e4e4e4;letter-spacing:0.078px;">None</div>
<div class="t" style="left:1122px;top:741px;font-size:12px;line-height:14px;color:#e4e4e4;letter-spacing:-0.477px;">R:0 G:0 B:0 (#000000)  0.500 pt</div>
</body></html>
